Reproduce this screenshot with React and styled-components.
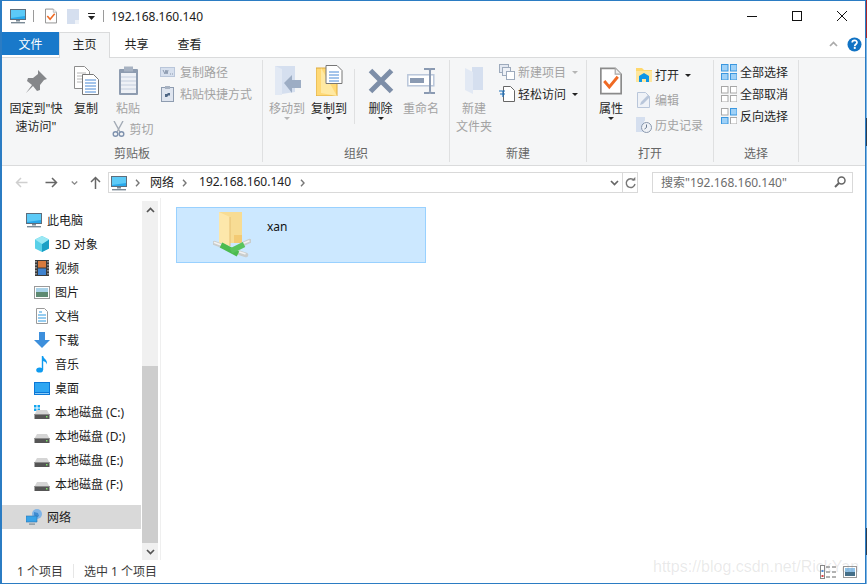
import React from "react";
import styled, { createGlobalStyle } from "styled-components";

const GlobalStyle = createGlobalStyle`
  html, body {
    margin: 0;
    padding: 0;
    width: 867px;
    height: 585px;
    overflow: hidden;
    background: #fff;
    font-family: "Noto Sans", "Noto Sans CJK SC", sans-serif;
    font-size: 12px;
    color: #222;
  }
  * { box-sizing: border-box; }
  svg { display: block; flex: none; }
`;

const Window = styled.div`
  position: relative;
  width: 866px;
  height: 584px;
  display: flex;
  flex-direction: column;
  border: 1px solid #2b7cc3;
  border-left-width: 2px;
  overflow: hidden;
`;

const TitleBar = styled.div`
  height: 30px;
  display: flex;
  align-items: center;
  padding: 0 1px 0 8px;
`;
const QuickIcons = styled.div`
  display: flex;
  align-items: center;
`;
const QuickSlot = styled.div`
  margin-left: ${(p) => p.$ml}px;
`;
const TitleRule = styled.div`
  width: 1px;
  height: 12px;
  background: #9a9a9a;
  margin: ${(p) => p.$margin};
`;
const TitleText = styled.div`
  flex: 1;
  font-size: 12px;
  margin-left: 7px;
  color: #1a1a1a;
`;
const WinButton = styled.div`
  width: 45px;
  height: 30px;
  display: flex;
  align-items: center;
  justify-content: center;
`;

const TabRow = styled.div`
  height: 27px;
  display: flex;
  align-items: flex-start;
  padding-top: 1px;
  border-bottom: 1px solid #dadbdc;
`;
const FileTab = styled.div`
  width: 57px;
  height: 23px;
  background: #1979ca;
  color: #fff;
  display: flex;
  align-items: center;
  justify-content: center;
`;
const HomeTab = styled.div`
  width: 51px;
  height: 27px;
  margin-bottom: -1px;
  background: #f5f6f7;
  border: 1px solid #dadbdc;
  border-bottom: none;
  display: flex;
  align-items: center;
  justify-content: center;
  padding-bottom: 4px;
`;
const PlainTab = styled.div`
  width: 53px;
  height: 23px;
  display: flex;
  align-items: center;
  justify-content: center;
`;
const TabEnd = styled.div`
  margin-left: auto;
  height: 24px;
  display: flex;
  align-items: center;
  gap: 9px;
  padding-right: 3px;
`;

const Ribbon = styled.div`
  height: 108px;
  display: flex;
  background: #f5f6f7;
  border-bottom: 1px solid #dadbdc;
  padding-top: 2px;
`;
const Group = styled.div`
  width: ${(p) => p.$w}px;
  height: 102px;
  display: flex;
  flex-direction: column;
  border-right: 1px solid #dfe0e1;
`;
const GroupBody = styled.div`
  flex: 1;
  display: flex;
  padding-top: 2px;
`;
const GroupLabel = styled.div`
  height: 18px;
  display: flex;
  align-items: center;
  justify-content: center;
  color: #666;
`;
const BigButton = styled.div`
  width: ${(p) => p.$w}px;
  margin-left: ${(p) => p.$ml || 0}px;
  display: flex;
  flex-direction: column;
  align-items: center;
  color: ${(p) => (p.$off ? "#a3a3a3" : "#262626")};
`;
const BigIcon = styled.div`
  height: 38px;
  padding-bottom: 1px;
  display: flex;
  align-items: center;
  justify-content: center;
`;
const BigLabel = styled.div`
  line-height: 18px;
  text-align: center;
  white-space: nowrap;
`;
const DropMark = styled.div`
  width: 0;
  height: 0;
  margin-top: -1px;
  border-left: 3px solid transparent;
  border-right: 3px solid transparent;
  border-top: 3px solid ${(p) => (p.$off ? "#b5b5b5" : "#222")};
`;
const GroupRule = styled.div`
  width: 1px;
  height: 55px;
  margin: 7px 0 0 ${(p) => p.$ml || 0}px;
  background: #dfe0e1;
`;
const SmallColumn = styled.div`
  margin: -1px 0 0 ${(p) => p.$ml}px;
  display: flex;
  flex-direction: column;
  gap: ${(p) => p.$gap || 0}px;
  padding-top: ${(p) => p.$top || 0}px;
`;
const SmallRow = styled.div`
  height: 22px;
  display: flex;
  align-items: center;
  white-space: nowrap;
  gap: ${(p) => p.$gap || 5}px;
  margin-left: ${(p) => p.$ml || 0}px;
  color: ${(p) => (p.$off ? "#a3a3a3" : "#262626")};
`;
const SmallIcon = styled.div`
  width: ${(p) => p.$w || 16}px;
  display: flex;
  justify-content: center;
`;
const InlineDrop = styled(DropMark)`
  margin: 1px 0 0 3px;
`;

const AddressRow = styled.div`
  height: 32px;
  display: flex;
  align-items: center;
  padding-top: 1px;
`;
const NavArrow = styled.div`
  width: ${(p) => p.$w}px;
  display: flex;
  justify-content: center;
`;
const AddressBox = styled.div`
  width: 530px;
  height: 21px;
  margin-left: 4px;
  border: 1px solid #d9d9d9;
  display: flex;
  align-items: center;
  padding-left: 2px;
`;
const Crumb = styled.div`
  margin: 0 0 2px ${(p) => p.$ml}px;
  color: #222;
`;
const CrumbChevron = styled.div`
  margin-left: ${(p) => p.$ml}px;
`;
const AddressEnd = styled.div`
  margin-left: auto;
  display: flex;
  height: 100%;
  align-items: center;
`;
const DropZone = styled.div`
  width: 16px;
  display: flex;
  justify-content: center;
`;
const RefreshZone = styled.div`
  width: 15px;
  height: 100%;
  border-left: 1px solid #d9d9d9;
  display: flex;
  align-items: center;
  justify-content: center;
`;
const SearchBox = styled.div`
  width: 201px;
  height: 21px;
  margin-left: 14px;
  border: 1px solid #d9d9d9;
  display: flex;
  align-items: center;
  justify-content: space-between;
  padding: 0 6px 1px 8px;
  color: #6d6d6d;
`;

const Main = styled.div`
  flex: 1;
  display: flex;
  min-height: 0;
`;
const Sidebar = styled.div`
  width: 140px;
  padding: 10px 1px 0 0;
  display: flex;
  flex-direction: column;
`;
const NavRow = styled.div`
  height: 24px;
  display: flex;
  align-items: center;
  gap: 5px;
  padding-left: ${(p) => p.$indent}px;
  margin-top: ${(p) => p.$mt || 0}px;
  background: ${(p) => (p.$active ? "#d9d9d9" : "transparent")};
  color: #1c1c1c;
  white-space: nowrap;
`;
const Scrollbar = styled.div`
  width: 16px;
  margin-top: 3px;
  background: #f0f0f0;
  display: flex;
  flex-direction: column;
`;
const ScrollEnd = styled.div`
  height: 17px;
  display: flex;
  align-items: center;
  justify-content: center;
`;
const ScrollSpace = styled.div`
  height: 148px;
`;
const ScrollThumb = styled.div`
  flex: 1;
  background: #cdcdcd;
`;
const Splitter = styled.div`
  width: 1px;
  margin-left: 2px;
  background: #efefef;
`;
const Content = styled.div`
  flex: 1;
  padding: 9px 0 0 15px;
`;
const FileTile = styled.div`
  width: 250px;
  height: 56px;
  background: #cce8ff;
  border: 1px solid #99d1ff;
  display: flex;
  align-items: flex-start;
  padding: 3px 0 0 36px;
`;
const FileName = styled.div`
  margin: 7px 0 0 16px;
  color: #111;
`;

const StatusBar = styled.div`
  height: 23px;
  display: flex;
  align-items: center;
  padding: 0 0 2px 15px;
  color: #3a3a3a;
`;
const StatusRule = styled.div`
  width: 1px;
  height: 14px;
  margin: 0 10px 0 10px;
  background: #e6e6e6;
`;
const ViewIcons = styled.div`
  margin-left: auto;
  display: flex;
  gap: 6px;
  align-items: center;
  padding: 2px 8px 0 0;
`;
const Watermark = styled.div`
  position: absolute;
  left: 651px;
  top: 557px;
  font-family: "Liberation Sans", sans-serif;
  font-size: 16px;
  color: rgba(120, 120, 120, 0.16);
  white-space: nowrap;
`;
// neighbouring window peeking out behind the right edge
const EdgeStrip = styled.div`
  position: absolute;
  left: 866px;
  top: 0;
  width: 1px;
  height: 584px;
  background: linear-gradient(
    #a8262c 0, #a8262c 38px,
    #7db5e6 38px, #7db5e6 118px,
    #2c3e55 118px, #2c3e55 146px,
    #7db5e6 146px, #7db5e6 528px,
    #2c3e55 528px, #2c3e55 555px,
    #7db5e6 555px
  );
`;

const Monitor = ({ s = 16 }) => (
  <svg width={s} height={s} viewBox="0 0 16 16">
    <rect x="0.5" y="1.5" width="15" height="10" fill="#29a8ea" stroke="#5d6d7c" />
    <path d="M1 2h14v6L1 10z" fill="#5ccaf7" />
    <rect x="6" y="12" width="4" height="1.5" fill="#7a8a96" />
    <rect x="1" y="14" width="14" height="1.4" fill="#7a8a96" />
  </svg>
);
const Props = ({ s = 16, w = 12 }) => (
  <svg width={w} height={s} viewBox="0 0 26 32">
    <path d="M1 1h17l7 7v23H1z" fill="#fff" stroke="#8b8b8b" strokeWidth="2" />
    <path d="M18 1v7h7" fill="#eee" stroke="#aaa" strokeWidth="1.5" />
    <path d="M5 16l6 7 10-12" fill="none" stroke="#ef6a24" strokeWidth="3.4" />
  </svg>
);
const BlankDoc = () => (
  <svg width="12" height="15" viewBox="0 0 12 15">
    <path d="M0 0h12v15H0z" fill="#d5dfef" />
    <path d="M8 11h4v4H8z" fill="#eef2f8" />
  </svg>
);
const MiniDrop = () => (
  <svg width="7" height="7" viewBox="0 0 7 7">
    <rect x="0" y="0" width="7" height="1" fill="#222" />
    <path d="M0 3h7L3.5 7z" fill="#222" />
  </svg>
);
const Chevron = ({ up, color = "#555", w = 9 }) => (
  <svg width={w} height="6" viewBox="0 0 9 6">
    <path d={up ? "M1 5l3.5-3.5L8 5" : "M1 1l3.5 3.5L8 1"} fill="none" stroke={color} strokeWidth="1.7" />
  </svg>
);
const ChevronRight = () => (
  <svg width="5" height="8" viewBox="0 0 5 8">
    <path d="M1 .8L4 4 1 7.200" fill="none" stroke="#777" strokeWidth="1.4" />
  </svg>
);
const Help = () => (
  <svg width="15" height="15" viewBox="0 0 15 15">
    <circle cx="7.5" cy="7.5" r="7" fill="#1173c4" />
    <path d="M5.2 5.6c0-3 4.8-3 4.8-.2 0 1.9-2.3 1.8-2.3 3.8" fill="none" stroke="#fff" strokeWidth="1.7" />
    <rect x="6.8" y="10" width="1.9" height="1.9" fill="#fff" />
  </svg>
);
const Pin = () => (
  <svg width="24" height="24" viewBox="0 0 24 24">
    <path d="M14 1l9 9-3 1-4 5 0 5-3 1-4-5-7 7 6-8-5-4 1-3 5 0 5-4z" fill="#85878a" />
  </svg>
);
const CopyDocs = () => (
  <svg width="25" height="29" viewBox="0 0 25 29">
    <path d="M.5.5h10l5 5v17H.5z" fill="#fff" stroke="#8d8d8d" />
    <path d="M3 7h9M3 10h9M3 13h9M3 16h9" stroke="#b6b6b6" />
    <path d="M8.5 8.5h11l5 5v15h-16z" fill="#fff" stroke="#777" />
    <path d="M11 14h11M11 17h11M11 20h11M11 23h11M11 26h11" stroke="#4a8ad6" />
  </svg>
);
const Paste = () => (
  <svg width="21" height="30" viewBox="0 0 21 30">
    <rect x="1" y="3" width="19" height="26" rx="1" fill="#8e9cb0" />
    <rect x="3" y="7" width="15" height="20" fill="#eef1f6" />
    <path d="M3 11h15M3 15h15M3 19h15M3 23h15" stroke="#c4cede" />
    <rect x="6" y="0.5" width="9" height="5" fill="#a7b2c2" />
  </svg>
);
const PathIcon = () => (
  <svg width="15" height="10" viewBox="0 0 15 10">
    <rect x="0.5" y="0.5" width="14" height="9" fill="#d7e0ee" stroke="#b9c6da" />
    <path d="M3 3l2 4 1-4 1 4 1-4M10 7h1M12 7h1" fill="none" stroke="#8a98ad" />
  </svg>
);
const ShortcutIcon = () => (
  <svg width="13" height="16" viewBox="0 0 13 16">
    <rect x="0.5" y="1.5" width="12" height="14" fill="#dfe5ef" stroke="#8e9cb0" />
    <rect x="4" y="0" width="5" height="3" fill="#a7b2c2" />
    <path d="M4 11l0-3 3 0-1-1 3 0 0 3-1-1-2 2z" fill="#4f6785" />
  </svg>
);
const Scissors = () => (
  <svg width="13" height="16" viewBox="0 0 13 16">
    <path d="M2 0l6 11M11 0L5 11" stroke="#a3abb6" strokeWidth="1.4" fill="none" />
    <circle cx="3.5" cy="13" r="2.3" fill="none" stroke="#7f92ae" strokeWidth="1.4" />
    <circle cx="9.5" cy="13" r="2.3" fill="none" stroke="#7f92ae" strokeWidth="1.4" />
  </svg>
);
const MoveTo = () => (
  <svg width="27" height="30" viewBox="0 0 27 30">
    <path d="M1 0h20v26L1 29z" fill="#d5dfef" />
    <path d="M1 0l7 3v26H1z" fill="#e2e9f4" />
    <path d="M10 17l8-8v5h9v8h-9v5z" fill="#9dadc4" />
  </svg>
);
const CopyTo = () => (
  <svg width="27" height="31" viewBox="0 0 27 31">
    <path d="M0 3h21v28H0z" fill="#ffd976" stroke="#dcaa3e" />
    <path d="M5 3v25l16 3" fill="#ffe9a3" />
    <path d="M10 .5h11l5 5v13H10z" fill="#fff" stroke="#777" />
    <path d="M13 7h10M13 10h10M13 13h10M13 16h10" stroke="#4a8ad6" />
  </svg>
);
const DeleteX = () => (
  <svg width="26" height="26" viewBox="0 0 26 26">
    <path d="M2.5 2.5l21 21M23.5 2.5l-21 21" stroke="#7d8ea8" strokeWidth="5" />
  </svg>
);
const Rename = () => (
  <svg width="28" height="26" viewBox="0 0 28 26">
    <rect x="0.8" y="6.8" width="26" height="11" fill="#fff" stroke="#b9c6da" strokeWidth="1.5" />
    <rect x="3" y="10" width="14" height="5" fill="#8a9ab2" />
    <path d="M17 1h5l1 1 1-1h4M23 2v21M17 25h5l1-1 1 1h4" fill="none" stroke="#8a9ab2" strokeWidth="2" />
  </svg>
);
const NewFolder = () => (
  <svg width="19" height="27" viewBox="0 0 19 27">
    <path d="M7 0h11v23H7z" fill="#d5dfef" />
    <path d="M0 1l8 4v22l-8-4z" fill="#e2e9f4" />
  </svg>
);
const NewItem = () => (
  <svg width="16" height="16" viewBox="0 0 16 16">
    <rect x="0.5" y="0.5" width="9" height="8" fill="#e3e8f1" stroke="#9daabc" />
    <rect x="3.5" y="3.5" width="8" height="8" fill="#eef1f6" stroke="#9daabc" />
    <rect x="7.5" y="7.5" width="8" height="8" fill="#fff" stroke="#9daabc" />
  </svg>
);
const EasyAccess = () => (
  <svg width="16" height="16" viewBox="0 0 16 16">
    <path d="M4.5.5h7l4 4v11h-11z" fill="#fff" stroke="#666" />
    <path d="M0 5h6M1 8h5M4 5v6" stroke="#1f6fb8" strokeWidth="1.2" fill="none" />
  </svg>
);
const OpenIcon = () => (
  <svg width="16" height="14" viewBox="0 0 16 14">
    <path d="M0 0h6l2 2h8v12H0z" fill="#ffd86c" />
    <path d="M0 3h16v11H0z" fill="#ffe79d" />
    <path d="M3 14V8l5-3 5 3v6h-3v-3H6v3z" fill="#0f96e6" />
  </svg>
);
const EditIcon = () => (
  <svg width="14" height="16" viewBox="0 0 14 16">
    <path d="M.5.5h8l4 4v11H.5z" fill="#eff2f7" stroke="#b9c6da" />
    <path d="M3 13l1-3 7-7 2 2-7 7z" fill="#b9c6da" />
  </svg>
);
const HistoryIcon = () => (
  <svg width="16" height="16" viewBox="0 0 16 16">
    <path d="M0 0h9v4h-1v11H0z" fill="#d5dfef" />
    <circle cx="10.5" cy="10.5" r="5" fill="#eef1f6" stroke="#8a98ad" />
    <path d="M10.5 7.5v3l-2 1.5" fill="none" stroke="#6a7a90" />
  </svg>
);
const GridIcon = ({ cells }) => (
  <svg width="16" height="16" viewBox="0 0 16 16">
    {[[0, 0], [9, 0], [0, 9], [9, 9]].map(([x, y], i) => (
      <rect
        key={i}
        x={x + 0.5}
        y={y + 0.5}
        width="6.5"
        height="6.5"
        fill={cells[i] ? "#9fd1f7" : "#fff"}
        stroke={cells[i] ? "#3a97df" : "#a7a7a7"}
      />
    ))}
  </svg>
);
const BackArrow = ({ color }) => (
  <svg width="13" height="11" viewBox="0 0 13 11">
    <path d="M12.5 5.5H1.5M6 1L1.5 5.5 6 10" fill="none" stroke={color} strokeWidth="1.5" />
  </svg>
);
const ForwardArrow = ({ color }) => (
  <svg width="13" height="11" viewBox="0 0 13 11">
    <path d="M.5 5.5h11M7 1l4.5 4.5L7 10" fill="none" stroke={color} strokeWidth="1.5" />
  </svg>
);
const UpArrow = () => (
  <svg width="11" height="13" viewBox="0 0 11 13">
    <path d="M5.5 13V1.5M1 6l4.5-4.5L10 6" fill="none" stroke="#666" strokeWidth="1.5" />
  </svg>
);
const Refresh = () => (
  <svg width="11" height="12" viewBox="0 0 11 12">
    <path d="M9 3.2A4.4 4.4 0 1 0 10 7" fill="none" stroke="#777" strokeWidth="1.4" />
    <path d="M6.5 3.6h3.8V0z" fill="#777" />
  </svg>
);
const Magnifier = () => (
  <svg width="12" height="12" viewBox="0 0 12 12">
    <circle cx="7.5" cy="4.5" r="3.5" fill="none" stroke="#666" strokeWidth="1.5" />
    <path d="M5 7l-4 4" stroke="#666" strokeWidth="2" />
  </svg>
);
const Cube = () => (
  <svg width="16" height="16" viewBox="0 0 16 16">
    <path d="M8 0l7 3.5v9L8 16l-7-3.5v-9z" fill="#58d0e8" />
    <path d="M8 8l7-4.5v9L8 16z" fill="#1b9fc5" />
    <path d="M8 0l7 3.5L8 8 1 3.5z" fill="#9ae8f4" />
  </svg>
);
const Film = () => (
  <svg width="14" height="16" viewBox="0 0 14 16">
    <rect width="14" height="16" fill="#3a3a3a" />
    <rect x="3" y="1" width="8" height="6.5" fill="#d77a3d" />
    <rect x="3" y="8.5" width="8" height="6.5" fill="#3f83cf" />
    <path d="M1 1v14M13 1v14" stroke="#ddd" strokeDasharray="1.5 1.5" />
  </svg>
);
const Picture = () => (
  <svg width="16" height="13" viewBox="0 0 16 13">
    <rect x="0.5" y="0.5" width="15" height="12" fill="#fff" stroke="#9a9a9a" />
    <rect x="2" y="2" width="12" height="4" fill="#a9d2e8" />
    <path d="M2 6h12v5H2z" fill="#5e8a72" />
  </svg>
);
const DocFile = () => (
  <svg width="12" height="16" viewBox="0 0 12 16">
    <path d="M.5.5h8l3 3v12H.5z" fill="#fff" stroke="#9a9a9a" />
    <path d="M3 4h3M2 7h8M2 10h8M2 13h8" stroke="#2f9ae0" />
  </svg>
);
const Download = () => (
  <svg width="16" height="16" viewBox="0 0 16 16">
    <path d="M5 0h6v8h5l-8 8-8-8h5z" fill="#3d8fdc" />
  </svg>
);
const Music = () => (
  <svg width="12" height="17" viewBox="0 0 12 17">
    <ellipse cx="3.6" cy="14" rx="3.4" ry="2.6" fill="#0f9bf0" />
    <path d="M5.8 14V0h1.4c.3 3 4.8 3.8 3.6 8.5-.4-2-2.300-3-3.600-3.400V14z" fill="#0f9bf0" />
  </svg>
);
const Desktop = () => (
  <svg width="16" height="13" viewBox="0 0 16 13">
    <rect width="16" height="13" fill="#0b78d7" />
    <path d="M1 1h14v9H1z" fill="#2ea6f2" />
    <rect x="1" y="11" width="14" height="1" fill="#8ccdf7" />
  </svg>
);
const Drive = ({ system }) => (
  <svg width="16" height="16" viewBox="0 0 16 16">
    {system && <path d="M0 1h2.500v2.500H0zM3.500 1H6v2.500H3.500zM0 4.500h2.500V7H0zM3.500 4.500H6V7H3.500z" fill="#12a5ef" />}
    <path d="M3 6h10l2.500 4.500h-15z" fill="#d5d5d5" />
    <rect x="0.500" y="10" width="15" height="5" fill="#555" />
    <rect x="0.500" y="10" width="15" height="1" fill="#8a8a8a" />
    <rect x="12" y="12" width="1.500" height="1.500" fill="#7fe06a" />
  </svg>
);
const NetworkIcon = () => (
  <svg width="16" height="16" viewBox="0 0 16 16">
    <circle cx="11" cy="5" r="5" fill="#7fb4e6" />
    <path d="M8 3l4 1 1 3-3 2-2-3z" fill="#3e8bd0" />
    <path d="M0 7h11v6H0z" fill="#38a3e8" stroke="#2a73b0" strokeWidth="0.6" />
    <rect x="3" y="14.500" width="6" height="1.200" fill="#7a8a96" />
  </svg>
);
const ShareFolder = () => (
  <svg width="38" height="47" viewBox="0 0 38 47">
    <path d="M6 1h23v31H6z" fill="#f7dc94" />
    <path d="M21 24h8v8h-8z" fill="#f3ca74" />
    <path d="M6 1l11 5v29L6 32z" fill="#fde7ab" />
    <path d="M17 6v29" stroke="#e6bf72" />
    <path d="M1.500 32l8 3M30 33l6.500-3M24 41l9 3" stroke="#c9cdcd" strokeWidth="4.500" strokeLinecap="round" />
    <path d="M1.500 31.500l6 2.200M31 32l5-2M25 40.500l7 2.300" stroke="#f2f2f2" strokeWidth="1.500" strokeLinecap="round" />
    <path d="M8 34l17 9" stroke="#4cbb4f" strokeWidth="5.500" />
    <path d="M18 40l13-6.500" stroke="#58c45c" strokeWidth="5.500" />
  </svg>
);
const DetailsView = () => (
  <svg width="17" height="14" viewBox="0 0 17 14">
    <rect x="0.500" y="0.500" width="4" height="13" fill="#fff" stroke="#888" />
    <rect x="1.500" y="5" width="2" height="2" fill="#4a8ad6" />
    <rect x="1.500" y="10" width="2" height="2" fill="#d44" />
    <path d="M6 2h4M12 2h4M6 7h4M12 7h4M6 12h4M12 12h4" stroke="#666" />
  </svg>
);
const TileView = () => (
  <svg width="14" height="12" viewBox="0 0 14 12">
    <rect x="0.500" y="0.500" width="13" height="11" fill="#fff" stroke="#999" />
    <rect x="2" y="2" width="10" height="4" fill="#8fc3ea" />
    <rect x="2" y="6" width="10" height="4" fill="#456f88" />
  </svg>
);

const navItems = [
  ["3D 对象", <Cube />],
  ["视频", <Film />],
  ["图片", <Picture />],
  ["文档", <DocFile />],
  ["下载", <Download />],
  ["音乐", <Music />],
  ["桌面", <Desktop />],
  ["本地磁盘 (C:)", <Drive system />],
  ["本地磁盘 (D:)", <Drive />],
  ["本地磁盘 (E:)", <Drive />],
  ["本地磁盘 (F:)", <Drive />],
];

export default function App() {
  return (
    <>
      <GlobalStyle />
      <Window>
        <TitleBar>
          <QuickIcons>
            <Monitor />
            <TitleRule $margin="0 11px 0 7px" />
            <Props />
            <QuickSlot $ml={10}><BlankDoc /></QuickSlot>
            <QuickSlot $ml={9}><MiniDrop /></QuickSlot>
            <TitleRule $margin="0 0 0 8px" />
          </QuickIcons>
          <TitleText>192.168.160.140</TitleText>
          <WinButton>
            <svg width="10" height="10" viewBox="0 0 10 10"><path d="M0 5.500h10" stroke="#111" /></svg>
          </WinButton>
          <WinButton>
            <svg width="10" height="10" viewBox="0 0 10 10"><rect x="0.500" y="0.500" width="9" height="9" fill="none" stroke="#111" /></svg>
          </WinButton>
          <WinButton>
            <svg width="10" height="10" viewBox="0 0 10 10"><path d="M0 0l10 10M10 0L0 10" stroke="#111" /></svg>
          </WinButton>
        </TitleBar>

        <TabRow>
          <FileTab>文件</FileTab>
          <HomeTab>主页</HomeTab>
          <PlainTab>共享</PlainTab>
          <PlainTab>查看</PlainTab>
          <TabEnd>
            <Chevron up color="#aaa" />
            <Help />
          </TabEnd>
        </TabRow>

        <Ribbon>
          <Group $w={261}>
            <GroupBody>
              <BigButton $w={64} $ml={2}>
                <BigIcon><Pin /></BigIcon>
                <BigLabel>固定到"快<br />速访问"</BigLabel>
              </BigButton>
              <BigButton $w={36}>
                <BigIcon><CopyDocs /></BigIcon>
                <BigLabel>复制</BigLabel>
              </BigButton>
              <BigButton $w={50} $off $ml={-1}>
                <BigIcon><Paste /></BigIcon>
                <BigLabel>粘贴</BigLabel>
                <SmallRow $off $gap={5} $ml={9}>
                  <Scissors />
                  剪切
                </SmallRow>
              </BigButton>
              <SmallColumn $ml={6}>
                <SmallRow $off><SmallIcon><PathIcon /></SmallIcon>复制路径</SmallRow>
                <SmallRow $off><SmallIcon><ShortcutIcon /></SmallIcon>粘贴快捷方式</SmallRow>
              </SmallColumn>
            </GroupBody>
            <GroupLabel>剪贴板</GroupLabel>
          </Group>

          <Group $w={187}>
            <GroupBody>
              <BigButton $w={44} $off $ml={2}>
                <BigIcon><MoveTo /></BigIcon>
                <BigLabel>移动到</BigLabel>
                <DropMark $off />
              </BigButton>
              <BigButton $w={40}>
                <BigIcon><CopyTo /></BigIcon>
                <BigLabel>复制到</BigLabel>
                <DropMark />
              </BigButton>
              <GroupRule $ml={5} />
              <BigButton $w={51}>
                <BigIcon><DeleteX /></BigIcon>
                <BigLabel>删除</BigLabel>
                <DropMark />
              </BigButton>
              <BigButton $w={30} $off>
                <BigIcon><Rename /></BigIcon>
                <BigLabel>重命名</BigLabel>
              </BigButton>
            </GroupBody>
            <GroupLabel>组织</GroupLabel>
          </Group>

          <Group $w={137}>
            <GroupBody>
              <BigButton $w={44} $off $ml={2}>
                <BigIcon><NewFolder /></BigIcon>
                <BigLabel>新建<br />文件夹</BigLabel>
              </BigButton>
              <SmallColumn $ml={3}>
                <SmallRow $off $gap={3}><SmallIcon><NewItem /></SmallIcon>新建项目<InlineDrop $off /></SmallRow>
                <SmallRow $gap={3}><SmallIcon><EasyAccess /></SmallIcon>轻松访问<InlineDrop /></SmallRow>
              </SmallColumn>
            </GroupBody>
            <GroupLabel>新建</GroupLabel>
          </Group>

          <Group $w={127}>
            <GroupBody>
              <BigButton $w={44} $ml={2}>
                <BigIcon><Props s={28} w={22} /></BigIcon>
                <BigLabel>属性</BigLabel>
                <DropMark />
              </BigButton>
              <SmallColumn $ml={3} $gap={3} $top={3}>
                <SmallRow $gap={3}><SmallIcon><OpenIcon /></SmallIcon>打开<InlineDrop /></SmallRow>
                <SmallRow $off $gap={3}><SmallIcon><EditIcon /></SmallIcon>编辑</SmallRow>
                <SmallRow $off $gap={3}><SmallIcon><HistoryIcon /></SmallIcon>历史记录</SmallRow>
              </SmallColumn>
            </GroupBody>
            <GroupLabel>打开</GroupLabel>
          </Group>

          <Group $w={85}>
            <GroupBody>
              <SmallColumn $ml={7}>
                <SmallRow $gap={3}><GridIcon cells={[1, 1, 1, 1]} />全部选择</SmallRow>
                <SmallRow $gap={3}><GridIcon cells={[0, 0, 0, 0]} />全部取消</SmallRow>
                <SmallRow $gap={3}><GridIcon cells={[0, 1, 1, 0]} />反向选择</SmallRow>
              </SmallColumn>
            </GroupBody>
            <GroupLabel>选择</GroupLabel>
          </Group>
        </Ribbon>

        <AddressRow>
          <NavArrow $w={38}><BackArrow color="#cfcfcf" /></NavArrow>
          <NavArrow $w={22}><ForwardArrow color="#666" /></NavArrow>
          <NavArrow $w={24}><Chevron color="#888" w={7} /></NavArrow>
          <NavArrow $w={18}><UpArrow /></NavArrow>
          <AddressBox>
            <Monitor />
            <CrumbChevron $ml={8}><ChevronRight /></CrumbChevron>
            <Crumb $ml={10}>网络</Crumb>
            <CrumbChevron $ml={8}><ChevronRight /></CrumbChevron>
            <Crumb $ml={12}>192.168.160.140</Crumb>
            <CrumbChevron $ml={9}><ChevronRight /></CrumbChevron>
            <AddressEnd>
              <DropZone><Chevron color="#666" /></DropZone>
              <RefreshZone><Refresh /></RefreshZone>
            </AddressEnd>
          </AddressBox>
          <SearchBox>
            搜索"192.168.160.140"
            <Magnifier />
          </SearchBox>
        </AddressRow>

        <Main>
          <Sidebar>
            <NavRow $indent={24}><Monitor />此电脑</NavRow>
            {navItems.map(([label, icon]) => (
              <NavRow key={label} $indent={32}>
                <SmallIcon>{icon}</SmallIcon>
                {label}
              </NavRow>
            ))}
            <NavRow $indent={24} $mt={9} $active><NetworkIcon />网络</NavRow>
          </Sidebar>
          <Scrollbar>
            <ScrollEnd><Chevron up /></ScrollEnd>
            <ScrollSpace />
            <ScrollThumb />
            <ScrollEnd><Chevron /></ScrollEnd>
          </Scrollbar>
          <Splitter />
          <Content>
            <FileTile>
              <ShareFolder />
              <FileName>xan</FileName>
            </FileTile>
          </Content>
        </Main>

        <StatusBar>
          1 个项目
          <StatusRule />
          选中 1 个项目
          <ViewIcons>
            <DetailsView />
            <TileView />
          </ViewIcons>
        </StatusBar>
        <Watermark>https://blog.csdn.net/RickYan</Watermark>
      </Window>
      <EdgeStrip />
    </>
  );
}
